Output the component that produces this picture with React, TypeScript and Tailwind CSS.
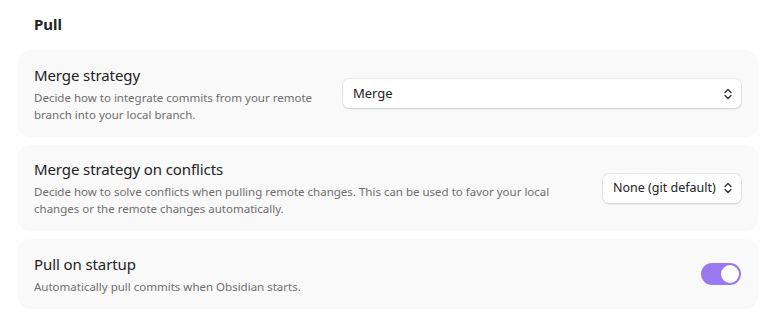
import React from "react";

const font = { fontFamily: '"Noto Sans", "Open Sans", sans-serif' };

function Chevrons() {
  return (
    <svg width="10" height="14" viewBox="0 0 10 14" fill="none" stroke="#333" strokeWidth="1.4" strokeLinecap="round" strokeLinejoin="round" className="shrink-0">
      <path d="M2 5.5 L5 2.5 L8 5.5" />
      <path d="M2 8.5 L5 11.5 L8 8.5" />
    </svg>
  );
}

function Select({ value, className, textClass }: { value: string; className: string; textClass: string }) {
  return (
    <div className={`flex items-center justify-between gap-[6px] h-[29px] rounded-[6px] bg-white pl-[10px] pr-[8px] shadow-[0_1px_2px_rgba(0,0,0,0.12),0_0_0_1px_rgba(0,0,0,0.06)] ${className}`}>
      <span className={`whitespace-nowrap text-[#222] ${textClass}`}>{value}</span>
      <Chevrons />
    </div>
  );
}

function Card({ title, desc, control, className }: { title: string; desc: React.ReactNode; control: React.ReactNode; className: string }) {
  return (
    <div className={`flex items-center justify-between rounded-[12px] bg-[#f9f9f9] pl-4 pr-[17px] ${className}`}>
      <div className="flex flex-col">
        <div className="text-[15px] leading-[20px] text-[#222] tracking-[-0.1px]">{title}</div>
        <div className="mt-[4px] text-[11.5px] leading-[17px] text-[#6e6e6e]">{desc}</div>
      </div>
      {control}
    </div>
  );
}

export default function App() {
  return (
    <div className="w-[771px] h-[328px] bg-white pl-[18px] pr-[13px] pt-[14px]" style={font}>
      <div className="pl-4 text-[15px] font-bold leading-[20px] text-[#222]">Pull</div>
      <div className="mt-[16px] flex flex-col gap-[8px]">
        <Card
          className="h-[87px]"
          title="Merge strategy"
          desc={<>Decide how to integrate commits from your remote<br />branch into your local branch.</>}
          control={<Select value="Merge" className="w-[398px]" textClass="text-[13px]" />}
        />
        <Card
          className="h-[86px]"
          title="Merge strategy on conflicts"
          desc={<>Decide how to solve conflicts when pulling remote changes. This can be used to favor your local<br />changes or the remote changes automatically.</>}
          control={<Select value="None (git default)" className="w-[138px]" textClass="text-[12.5px]" />}
        />
        <Card
          className="h-[70px]"
          title="Pull on startup"
          desc="Automatically pull commits when Obsidian starts."
          control={
            <div className="flex h-[22px] w-[40px] items-center justify-end rounded-full bg-[#9a78ef] p-[2px]">
              <div className="h-[18px] w-[18px] rounded-full bg-white" />
            </div>
          }
        />
      </div>
    </div>
  );
}
